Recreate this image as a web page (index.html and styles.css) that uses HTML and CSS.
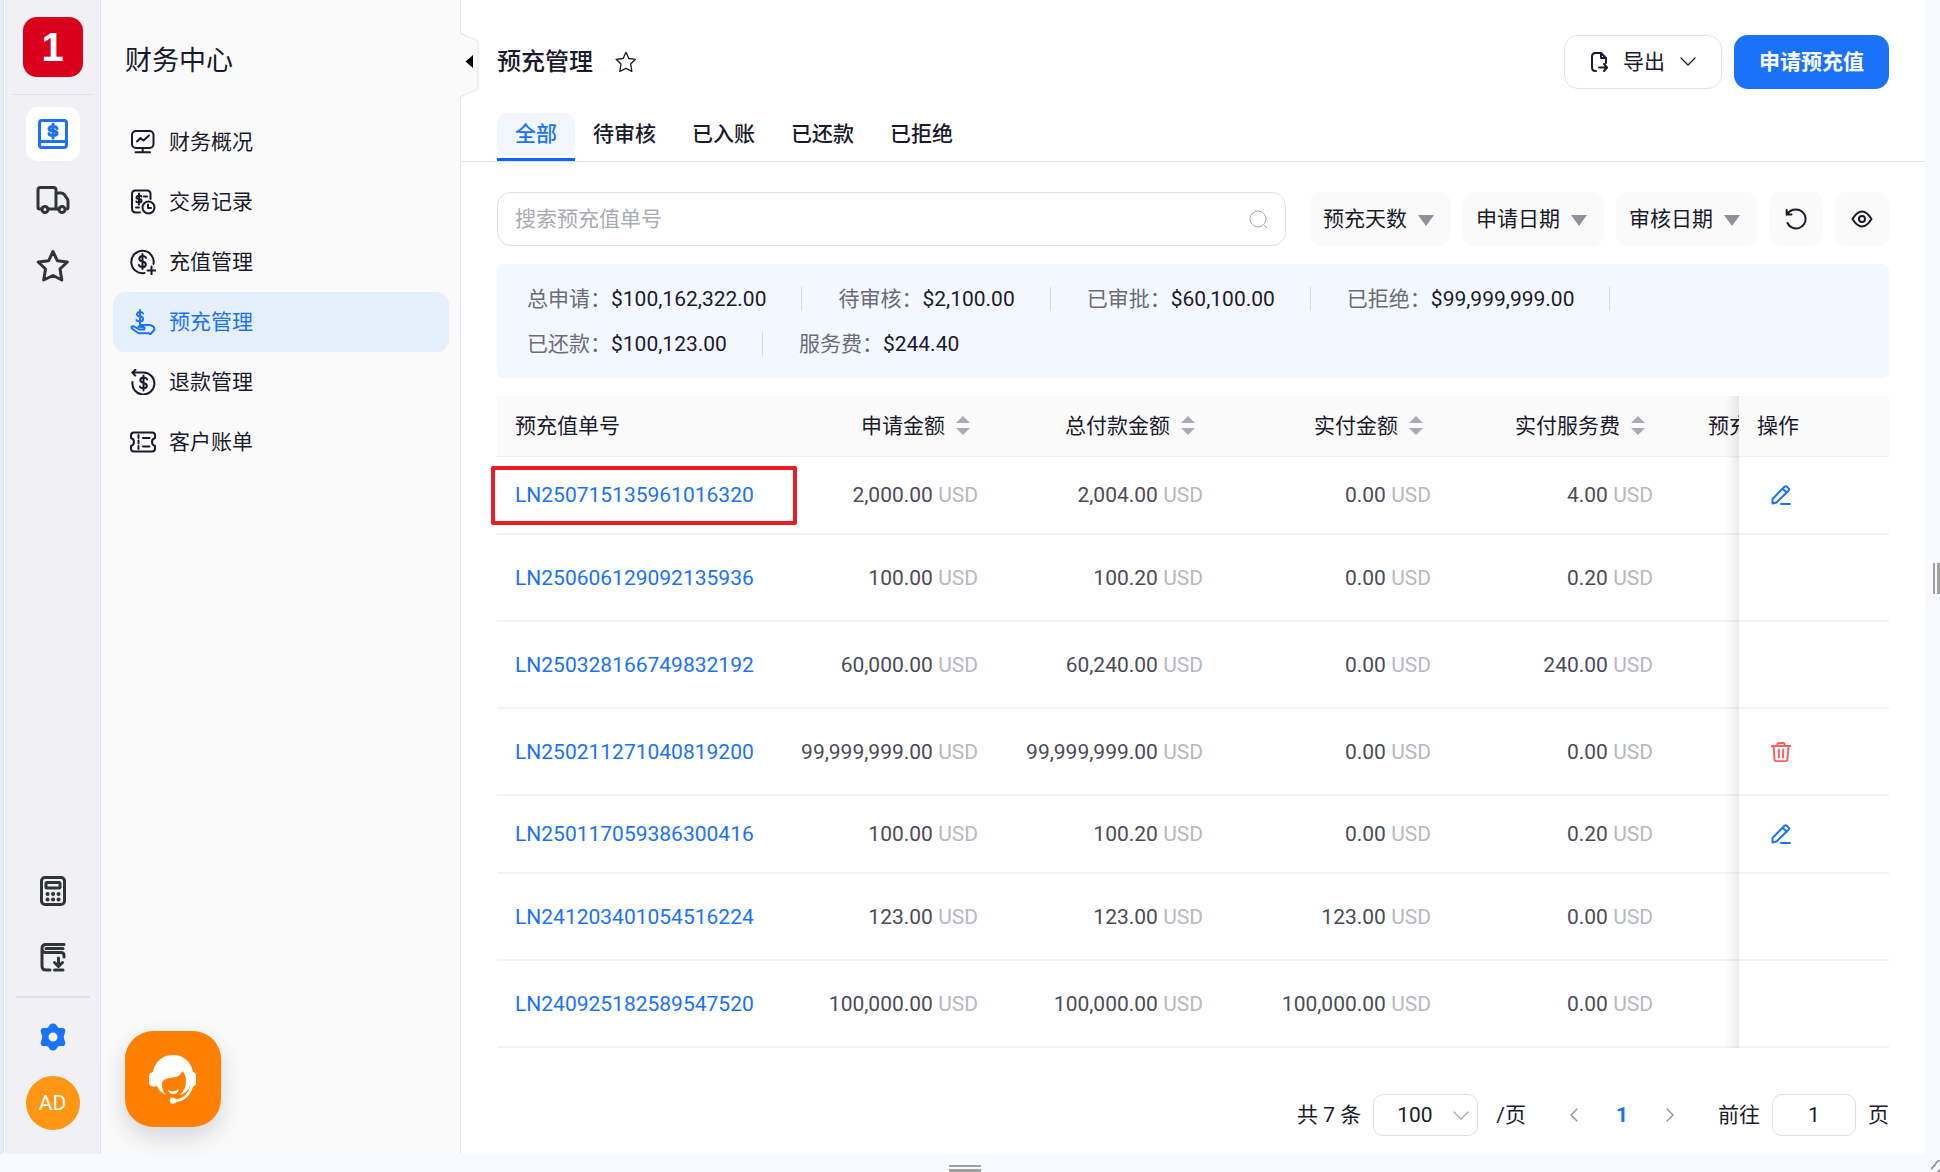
FILE: index.html
```html
<!DOCTYPE html>
<html lang="zh-CN">
<head>
  <meta charset="UTF-8">
  <title>预充管理</title>
  <meta name="viewport" content="width=device-width, initial-scale=1.0">
  <link rel="stylesheet" href="styles.css">
</head>
<body>

<!-- shared icons -->
<svg class="sprite" aria-hidden="true">
  <symbol id="i-star" viewBox="0 0 36 36">
    <path d="M18 3.5l4.3 9.2 10 1.3-7.3 7 1.8 11L18 27.500l-9.300 4.500 1.800-11-7.300-7 10.500-1.300z"/>
  </symbol>
  <symbol id="i-edit" viewBox="0 0 20 20">
    <path d="M1.500 18.500v-4.500L13.500 1.800q1.200-1.200 2.400 0l1.600 1.600q1.200 1.200 0 2.400L5.500 17.500zM12 4l3.800 3.800M10 19h9"/>
  </symbol>
  <symbol id="i-down" viewBox="0 0 16 12">
    <path d="M1 2l7 7 7-7"/>
  </symbol>
</svg>

<div class="app">
  <nav class="rail" aria-label="主导航">
    <div class="logo">1</div>
    <hr class="rail-line">
    <a href="#" class="rail-item active" aria-label="财务">
      <svg width="30" height="30" viewBox="0 0 30 30"><rect x="1.500" y="1.500" width="27" height="27" rx="2.500"/><path d="M2 22.500h26"/><path d="M19 9.500q-.5-2-4-2t-4 2.300q0 2 4 2.200t4 2.300q0 2.300-4 2.300t-4-2M15 5v14"/></svg>
    </a>
    <a href="#" class="rail-item" aria-label="物流">
      <svg width="36" height="30" viewBox="0 0 36 30"><path d="M7 24H4.500Q3 24 3 22.500V5q0-2.500 2.500-2.500h13q2.500 0 2.500 2.500v19h-8M21 8h5q2 0 3.300 1.700l2.700 3.800q1 1.300 1 3V22.500q0 1.500-1.500 1.500M21 24h3"/><circle cx="10" cy="24.500" r="3"/><circle cx="27" cy="24.500" r="3"/></svg>
    </a>
    <a href="#" class="rail-item" aria-label="收藏">
      <svg width="36" height="36"><use href="#i-star"/></svg>
    </a>
    <div class="rail-space"></div>
    <a href="#" class="rail-item" aria-label="计算器">
      <svg width="30" height="32" viewBox="0 0 30 32"><rect x="3.500" y="2.500" width="23" height="27" rx="3.500"/><rect x="8" y="7.500" width="14" height="5.500" rx="1"/><path class="dots" d="M9.500 19h.1M15 19h.1M20.500 19h.1M9.500 24.500h.1M15 24.500h.1M20.500 24.500h.1"/></svg>
    </a>
    <a href="#" class="rail-item" aria-label="下载">
      <svg width="30" height="32" viewBox="0 0 30 32"><path d="M26 3.500H8q-4 0-4 4t4 4h15q3 0 3 3V16M8 7.500h17M4 8v17q0 4 4 4h4M20.500 17v7.500M16.500 21.500l4 4 4-4M16.500 29H25"/></svg>
    </a>
    <hr class="rail-line short">
    <a href="#" class="rail-item gear" aria-label="设置">
      <svg width="26" height="28" viewBox="0 0 26 28"><path fill-rule="evenodd" d="M10 1.500Q11 .5 13 .5t3 1l2 3q1 .5 2 .5h3q1.500 0 2 1.500.8 2-.2 3.500L24 12.500q-.5 1.500 0 3l.8 2.500q1 1.500.2 3.500-.5 1.500-2 1.500h-3q-1 0-2 .5l-2 3q-1 1-3 1t-3-1l-2-3q-1-.5-2-.5H3q-1.500 0-2-1.500Q.2 19.500 1.200 18L2 15.500q.5-1.500 0-3L1.200 10Q.2 8.500 1 6.500 1.500 5 3 5h3q1 0 2-.5zM13 9.500a4.500 4.500 0 1 0 0 9 4.500 4.500 0 0 0 0-9z"/></svg>
    </a>
    <button type="button" class="avatar">AD</button>
  </nav>

  <aside class="sidebar">
    <h2>财务中心</h2>
    <ul class="menu">
      <li><a href="#">
        <svg viewBox="0 0 26 26"><rect x="2" y="2" width="21.500" height="17" rx="4"/><path d="M7 12.500l3.500-3.500 3 2.500L19 6.500M12.700 19v4M5.500 23.300h14.500"/></svg>
        财务概况</a></li>
      <li><a href="#">
        <svg viewBox="0 0 26 26"><path d="M10 23.500H6q-4 0-4-4V5q0-3.500 3.500-3.500H17q3.500 0 3.500 3.500v5M14 7.500h3M6 18.500h3"/><path d="M11.500 7.500Q11 6.500 9 6.500T6.500 8.300Q6.500 10 9 10t2.500 1.800q0 1.700-2.500 1.700t-2.600-1M9 4.500v11"/><circle cx="18.500" cy="18.500" r="6"/><path d="M18 15.500v3.500h3"/></svg>
        交易记录</a></li>
      <li><a href="#">
        <svg viewBox="0 0 26 26"><path d="M14.500 24A11.200 11.200 0 1 1 23.500 15M21.500 17.500v8M17.500 21.500h8"/><path d="M16 9q-.5-2-3.500-2T9.300 9.600q0 2.400 3.200 2.900t3.300 2.900q0 2.600-3.300 2.600T9 16M12.500 5v15"/></svg>
        充值管理</a></li>
      <li><a href="#" class="current">
        <svg viewBox="0 0 26 26"><path d="M13 4.500Q12.500 3 10 3T7 5.200Q7 7.300 10 7.600t3 2.400q0 2.500-3 2.500T6.500 11M10 1v14"/><path d="M1.500 18q1.500-1.500 3.500 0l4 2.500h5q1.500-1.500-.5-2.500h-2.500q-1 0-1.500-1M1.500 18q0 1 1 2l5 3.500q1 .7 3 .7h8l2 1 4-4.700q0-3.500-5-4.500h-8q-2 0-3 2"/></svg>
        预充管理</a></li>
      <li><a href="#">
        <svg viewBox="0 0 26 26"><path d="M2.500 13A11 11 0 1 0 13.500 3.500H2.500M5.500.8L2.300 3.600l3 3"/><path d="M17 10.500q-.5-2-3.500-2t-3.200 2.600q0 2.300 3.200 2.800t3.300 2.800q0 2.500-3.300 2.500T10 17.500M13.500 6.500v15"/></svg>
        退款管理</a></li>
      <li><a href="#">
        <svg viewBox="0 0 26 26"><path d="M4 3.500h18q3 0 3 3v2.500q-3 1-3 4t3 4v2.500q0 3-3 3H4q-3 0-3-3V17q3-1 3-4T1 9V6.500q0-3 3-3zM13 9h6.500M13 17.500h6.500"/><path d="M8.500 6v14" stroke-dasharray="3 2.500"/></svg>
        客户账单</a></li>
    </ul>
    <button type="button" class="fold" aria-label="收起">
      <svg width="19" height="66" viewBox="0 0 19 66"><path class="fold-bg" d="M0 1l18 8v48L0 65"/><path class="fold-arrow" d="M13 23v13L5.500 29.500z"/></svg>
    </button>
    <button type="button" class="service" aria-label="客服">
      <svg width="48" height="50" viewBox="0 0 48 50"><path d="M4 18C6 7 14 1 24 1s18 6 20 17q3 .5 3 3v8q0 3-3 3.500-4 14-17 15.500a3.200 3.200 0 1 1 0-2.500q10-1 14.500-13.500L41 32q-3 7-10 9 6-6 6-14 0-6-3.500-10-2.500 5-6.500 6-9 1-12 3-3 2-2 7 1 5 4 8-7-3-9-9-7 2-8-3v-7q0-3 4-4z"/><path d="M19 36q5 3 11-1-1 5-5.500 5T19 36z"/></svg>
    </button>
  </aside>

  <main class="main">
    <header class="page-head">
      <h1>预充管理</h1>
      <svg class="fav" width="24" height="24"><use href="#i-star"/></svg>
      <div class="actions">
        <button type="button" class="btn-export">
          <svg width="17" height="20" viewBox="0 0 17 20"><path d="M5 19H4.500Q1 19 1 15.500V4.500Q1 1 4.500 1H10l5 5v5M10 1v5h5M8 15.500h8M13 12l3 3.500-3 3.500"/></svg>
          导出
          <svg width="16" height="12"><use href="#i-down"/></svg>
        </button>
        <button type="button" class="btn-primary">申请预充值</button>
      </div>
    </header>

    <nav class="tabs">
      <a href="#" class="on"><span>全部</span></a>
      <a href="#"><span>待审核</span></a>
      <a href="#"><span>已入账</span></a>
      <a href="#"><span>已还款</span></a>
      <a href="#"><span>已拒绝</span></a>
    </nav>

    <div class="content">
      <form class="filters">
        <div class="search">
          <input type="text" placeholder="搜索预充值单号" aria-label="搜索预充值单号">
          <svg width="21" height="21" viewBox="0 0 21 21"><circle cx="10" cy="10" r="8"/><path d="M15.700 15.700l3 3"/></svg>
        </div>
        <button type="button" class="filter">预充天数<i></i></button>
        <button type="button" class="filter">申请日期<i></i></button>
        <button type="button" class="filter">审核日期<i></i></button>
        <button type="button" class="filter icon" aria-label="重置">
          <svg width="24" height="24" viewBox="0 0 24 24"><path d="M3 7.500h4.500M2.700 3v4.800M3 7.500Q6 2.500 12 2.500a9.500 9.500 0 1 1-8.500 13.500"/></svg>
        </button>
        <button type="button" class="filter icon" aria-label="显示">
          <svg width="24" height="24" viewBox="0 0 24 24"><path d="M2.500 12Q7 4.500 12 4.500T21.500 12Q17 19.500 12 19.500T2.500 12z"/><circle cx="12" cy="12" r="3"/></svg>
        </button>
      </form>

      <dl class="stats">
        <div><dt>总申请：</dt><dd>$100,162,322.00</dd></div>
        <div><dt>待审核：</dt><dd>$2,100.00</dd></div>
        <div><dt>已审批：</dt><dd>$60,100.00</dd></div>
        <div><dt>已拒绝：</dt><dd>$99,999,999.00</dd></div>
        <div><dt>已还款：</dt><dd>$100,123.00</dd></div>
        <div class="last"><dt>服务费：</dt><dd>$244.40</dd></div>
      </dl>

      <div class="table-box">
        <div class="table-scroll">
          <table>
            <colgroup>
              <col class="c-no"><col class="c-apply"><col class="c-total"><col class="c-paid"><col class="c-fee"><col class="c-days"><col class="c-op">
            </colgroup>
            <thead>
              <tr>
                <th>预充值单号</th>
                <th class="num">申请金额<i class="sort"></i></th>
                <th class="num">总付款金额<i class="sort"></i></th>
                <th class="num">实付金额<i class="sort"></i></th>
                <th class="num">实付服务费<i class="sort"></i></th>
                <th class="num">预充天数<i class="sort"></i></th>
                <th class="fixed">操作</th>
              </tr>
            </thead>
            <tbody>
              <tr class="short">
                <td><a href="#">LN250715135961016320</a></td>
                <td class="num">2,000.00 <small>USD</small></td>
                <td class="num">2,004.00 <small>USD</small></td>
                <td class="num">0.00 <small>USD</small></td>
                <td class="num">4.00 <small>USD</small></td>
                <td></td>
                <td class="fixed"><button type="button" class="op" aria-label="编辑"><svg><use href="#i-edit"/></svg></button></td>
              </tr>
              <tr>
                <td><a href="#">LN250606129092135936</a></td>
                <td class="num">100.00 <small>USD</small></td>
                <td class="num">100.20 <small>USD</small></td>
                <td class="num">0.00 <small>USD</small></td>
                <td class="num">0.20 <small>USD</small></td>
                <td></td>
                <td class="fixed"></td>
              </tr>
              <tr>
                <td><a href="#">LN250328166749832192</a></td>
                <td class="num">60,000.00 <small>USD</small></td>
                <td class="num">60,240.00 <small>USD</small></td>
                <td class="num">0.00 <small>USD</small></td>
                <td class="num">240.00 <small>USD</small></td>
                <td></td>
                <td class="fixed"></td>
              </tr>
              <tr>
                <td><a href="#">LN250211271040819200</a></td>
                <td class="num">99,999,999.00 <small>USD</small></td>
                <td class="num">99,999,999.00 <small>USD</small></td>
                <td class="num">0.00 <small>USD</small></td>
                <td class="num">0.00 <small>USD</small></td>
                <td></td>
                <td class="fixed"><button type="button" class="op del" aria-label="删除"><svg viewBox="0 0 20 20"><path d="M.5 4h19M6.500 3.800V2q0-1 1-1h5q1 0 1 1v1.800M2.500 4l1 13.500q.2 1.700 2 1.700h9q1.800 0 2-1.700l1-13.500M7.700 7.500l.3 8M12.300 7.500l-.3 8"/></svg></button></td>
              </tr>
              <tr class="short">
                <td><a href="#">LN250117059386300416</a></td>
                <td class="num">100.00 <small>USD</small></td>
                <td class="num">100.20 <small>USD</small></td>
                <td class="num">0.00 <small>USD</small></td>
                <td class="num">0.20 <small>USD</small></td>
                <td></td>
                <td class="fixed"><button type="button" class="op" aria-label="编辑"><svg><use href="#i-edit"/></svg></button></td>
              </tr>
              <tr>
                <td><a href="#">LN241203401054516224</a></td>
                <td class="num">123.00 <small>USD</small></td>
                <td class="num">123.00 <small>USD</small></td>
                <td class="num">123.00 <small>USD</small></td>
                <td class="num">0.00 <small>USD</small></td>
                <td></td>
                <td class="fixed"></td>
              </tr>
              <tr>
                <td><a href="#">LN240925182589547520</a></td>
                <td class="num">100,000.00 <small>USD</small></td>
                <td class="num">100,000.00 <small>USD</small></td>
                <td class="num">100,000.00 <small>USD</small></td>
                <td class="num">0.00 <small>USD</small></td>
                <td></td>
                <td class="fixed"></td>
              </tr>
            </tbody>
          </table>
        </div>
        <div class="mark"></div>
      </div>

      <div class="pager">
        <span>共 7 条</span>
        <div class="page-size">
          <select aria-label="每页条数"><option>100</option></select>
          <svg width="16" height="12"><use href="#i-down"/></svg>
        </div>
        <span class="per">/页</span>
        <button type="button" class="arrow" aria-label="上一页"><svg width="8" height="14" viewBox="0 0 8 14"><path d="M7 1L1 7l6 6"/></svg></button>
        <a href="#" class="page-no">1</a>
        <button type="button" class="arrow" aria-label="下一页"><svg width="8" height="14" viewBox="0 0 8 14"><path d="M1 1l6 6-6 6"/></svg></button>
        <label for="goto">前往</label>
        <input type="text" id="goto" value="1">
        <span>页</span>
      </div>
    </div>
  </main>
</div>

<div class="grip grip-right"></div>
<div class="grip grip-bottom"></div>
<div class="grip-corner"></div>

</body>
</html>
```
FILE: styles.css
```css
* {
  box-sizing: border-box;
}

body {
  margin: 0;
  min-height: 100vh;
  padding: 0 15px 18px 0;
  display: flex;
  position: relative;
  overflow: hidden;
  background: #f9faff;
  color: #1a1a2c;
  font-family: Roboto, "Noto Sans CJK SC", sans-serif;
  font-size: 21px;
  line-height: 30px;
}

button,
input,
select {
  font: inherit;
  color: inherit;
}

button {
  border: none;
  background: none;
  padding: 0;
  cursor: pointer;
}

a {
  color: inherit;
  text-decoration: none;
}

svg {
  fill: none;
  stroke: currentColor;
  stroke-width: 2;
  stroke-linecap: round;
  stroke-linejoin: round;
  flex-shrink: 0;
}

.sprite {
  position: absolute;
  width: 0;
  height: 0;
}

.app {
  flex: 1;
  min-width: 0;
  display: flex;
  border-left: 4px solid #e6ecf3;
  background: #fff;
}

/* icon rail */
.rail {
  width: 96px;
  margin-left: 1px;
  padding: 17px 0 24px;
  background: #f0f0f5;
  border-right: 1px solid #e2e2ea;
  display: flex;
  flex-direction: column;
  align-items: center;
  gap: 12px;
  color: #303538;
}

.logo {
  width: 60px;
  height: 60px;
  border-radius: 14px;
  background: #d9001b;
  color: #fff;
  font-family: "Liberation Sans", sans-serif;
  font-size: 40px;
  font-weight: bold;
  line-height: 60px;
  text-align: center;
}

.rail-line {
  width: 81px;
  height: 1px;
  margin: 5px 0 0;
  border: none;
  background: #e0e0e8;
}

.rail-line.short {
  width: 74px;
  height: 2px;
  margin: 0;
}

.rail-item {
  width: 54px;
  height: 54px;
  border-radius: 12px;
  display: flex;
  align-items: center;
  justify-content: center;
}

.rail-item svg {
  stroke-width: 3;
}

.rail-item .dots {
  stroke-width: 4;
}

.rail-item.active {
  background: #fff;
  color: #1a72f8;
}

.rail-item.gear {
  color: #1a72f8;
}

.rail-item.gear svg {
  fill: currentColor;
  stroke: none;
}

.rail-space {
  flex: 1;
}

.avatar {
  width: 54px;
  height: 54px;
  border-radius: 50%;
  background: #ff9614;
  color: #fff;
}

/* sidebar */
.sidebar {
  position: relative;
  width: 360px;
  padding: 40px 11px 0 12px;
  background: #fafafa;
  border-right: 1px solid #e4e4ec;
}

.sidebar h2 {
  margin: 0 0 30px;
  padding-left: 12px;
  font-size: 27px;
  font-weight: 400;
  line-height: 42px;
}

.menu {
  list-style: none;
  margin: 0;
  padding: 0;
}

.menu a {
  height: 60px;
  padding: 0 17px;
  border-radius: 12px;
  display: flex;
  align-items: center;
  gap: 13px;
}

.menu svg {
  width: 26px;
  height: 26px;
}

.menu .current {
  background: #e6f0fd;
  color: #1a72f8;
}

.fold {
  position: absolute;
  top: 32px;
  right: -19px;
  width: 19px;
  height: 66px;
}

.fold svg {
  display: block;
}

.fold-bg {
  fill: #fafafa;
  stroke: #e4e4ec;
  stroke-width: 1;
}

.fold-arrow {
  fill: #000;
  stroke: none;
}

.service {
  position: absolute;
  left: 24px;
  bottom: 27px;
  width: 96px;
  height: 96px;
  border-radius: 28px;
  background: #ff8000;
  box-shadow: 0 10px 24px rgba(0, 0, 40, 0.15);
  color: #fff;
  display: flex;
  align-items: center;
  justify-content: center;
}

.service svg {
  fill: currentColor;
  stroke: none;
}

/* main */
.main {
  flex: 1;
  min-width: 0;
}

.page-head {
  height: 113px;
  padding: 35px 36px 0;
  display: flex;
  align-items: flex-start;
}

.page-head h1 {
  margin: 0;
  font-size: 24px;
  font-weight: 500;
  line-height: 54px;
}

.fav {
  margin: 15px 0 0 21px;
}

.actions {
  margin-left: auto;
  display: flex;
  gap: 12px;
}

.btn-export,
.btn-primary {
  height: 54px;
  border-radius: 14px;
  display: flex;
  align-items: center;
}

.btn-export {
  padding: 0 25px 0 26px;
  gap: 15px;
  border: 1px solid #e2e2ea;
}

.btn-primary {
  padding: 0 25px;
  background: #1a72f8;
  color: #fff;
  font-weight: 700;
}

.tabs {
  padding: 0 36px;
  height: 49px;
  display: flex;
  border-bottom: 1px solid #e2e4ea;
  font-weight: 500;
}

.tabs a {
  height: 48px;
  padding-right: 18px;
  margin-right: 18px;
}

.tabs span {
  display: block;
  line-height: 42px;
}

.tabs a.on {
  padding: 0;
  color: #1a72f8;
  border-bottom: 3px solid #0a66ff;
}

.tabs a.on span {
  padding: 0 18px;
  border-radius: 10px;
  background: #f1f6ff;
}

.content {
  padding: 30px 36px 0;
}

.filters {
  display: flex;
  gap: 12px;
}

.search {
  flex: 1;
  position: relative;
  margin-right: 12px;
}

.search input {
  width: 100%;
  height: 54px;
  padding: 0 54px 0 17px;
  border: 1px solid #dcdfe6;
  border-radius: 14px;
  outline: none;
}

.search input::placeholder {
  color: #a8abb2;
}

.search svg {
  position: absolute;
  right: 17px;
  top: 17px;
  color: #a8abb2;
  stroke-width: 1;
}

.filter {
  height: 54px;
  padding: 0 17px 0 13px;
  border-radius: 12px;
  background: #fafafa;
  display: flex;
  align-items: center;
  gap: 11px;
}

.filter i {
  margin-top: 2px;
  border: 8px solid transparent;
  border-top: 11px solid #90909c;
  border-bottom: none;
}

.filter.icon {
  width: 54px;
  padding: 0;
  justify-content: center;
}

.stats {
  margin: 18px 0;
  padding: 12px 30px;
  min-height: 114px;
  border-radius: 6px;
  background: #f3f7ff;
  display: flex;
  flex-wrap: wrap;
  align-content: flex-start;
}

.stats div {
  height: 45px;
  display: flex;
  align-items: center;
}

.stats div::after {
  content: "";
  width: 1px;
  height: 24px;
  margin: 0 36px 0 35px;
  background: #d5d8e0;
}

.stats .last::after {
  display: none;
}

.stats dt {
  color: #6b6b78;
}

.stats dd {
  margin: 0;
}

/* table */
.table-box {
  position: relative;
}

.table-scroll {
  overflow-x: auto;
  scrollbar-width: none;
}

table {
  width: 100%;
  min-width: 1496px;
  table-layout: fixed;
  border-collapse: separate;
  border-spacing: 0;
}

.c-apply,
.c-total {
  width: 225px;
}

.c-paid {
  width: 228px;
}

.c-fee {
  width: 222px;
}

.c-days {
  width: 172px;
}

.c-op {
  width: 150px;
}

th,
td {
  padding: 0 18px;
  text-align: left;
  white-space: nowrap;
  background: #fff;
}

th {
  height: 61px;
  background: #fafafa;
  border-bottom: 1px solid #f0f0f2;
  font-weight: 400;
}

td {
  height: 87px;
  border-bottom: 2px solid #f3f3f5;
  color: #4b4b57;
}

.short td {
  height: 78px;
}

td a {
  color: #1a72f8;
}

.num {
  text-align: right;
}

small {
  font-size: inherit;
  color: #b8b8c2;
}

.sort {
  display: inline-block;
  width: 14px;
  height: 19px;
  margin: 0 8px 0 11px;
  vertical-align: -2px;
}

.sort::before,
.sort::after {
  content: "";
  display: block;
  border: 7px solid transparent;
}

.sort::before {
  border-top: none;
  border-bottom-color: #a8abb2;
}

.sort::after {
  margin-top: 5px;
  border-bottom: none;
  border-top-color: #a8abb2;
}

.fixed {
  position: sticky;
  right: 0;
  z-index: 1;
}

.fixed::before {
  content: "";
  position: absolute;
  top: 0;
  bottom: -2px;
  left: -15px;
  width: 15px;
  background: linear-gradient(to left, rgba(0, 0, 0, 0.08), rgba(0, 0, 0, 0.02) 60%, transparent);
}

.op {
  display: block;
  width: 20px;
  height: 20px;
  margin-left: 14px;
  color: #1a72f8;
}

.op svg {
  display: block;
  width: 20px;
  height: 20px;
}

.op.del {
  color: #ff5f5f;
}

.mark {
  position: absolute;
  top: 70px;
  left: -6px;
  width: 306px;
  height: 59px;
  border: 4px solid #ed1c24;
  border-radius: 2px;
  pointer-events: none;
}

/* pagination */
.pager {
  margin-top: 46px;
  display: flex;
  align-items: center;
  justify-content: flex-end;
}

.page-size {
  position: relative;
  margin: 0 18px 0 12px;
}

.page-size select,
#goto {
  display: block;
  height: 42px;
  border: 1px solid #dcdfe6;
  border-radius: 10px;
  background: #fff;
  outline: none;
}

.page-size select {
  appearance: none;
  width: 105px;
  padding: 0 23px;
}

.page-size svg {
  position: absolute;
  right: 9px;
  top: 16px;
  color: #a8abb2;
}

.btn-export svg:last-child,
.page-size svg,
.arrow svg {
  stroke-width: 1.3;
}

.arrow {
  display: flex;
  color: #90909c;
}

.per {
  margin-right: 44px;
}

.page-no {
  margin: 0 38px;
  color: #1a72f8;
  font-weight: 700;
}

.pager label {
  margin-left: 44px;
}

#goto {
  width: 84px;
  margin: 0 12px;
  padding: 0;
  text-align: center;
}

/* resize handles of the frame */
.grip {
  position: absolute;
}

.grip-right {
  right: 0;
  top: 563px;
  width: 7px;
  height: 31px;
  border-left: 2px solid #a0a0a0;
  border-right: 3px solid #a0a0a0;
}

.grip-bottom {
  left: 949px;
  bottom: 0;
  width: 32px;
  height: 7px;
  border-top: 2px solid #a0a0a0;
  border-bottom: 3px solid #a0a0a0;
}

.grip-corner {
  position: absolute;
  right: 0;
  bottom: 0;
  width: 9px;
  height: 12px;
  background: repeating-linear-gradient(130deg, transparent 0 5px, #a0a0a0 5px 7px);
}
```
